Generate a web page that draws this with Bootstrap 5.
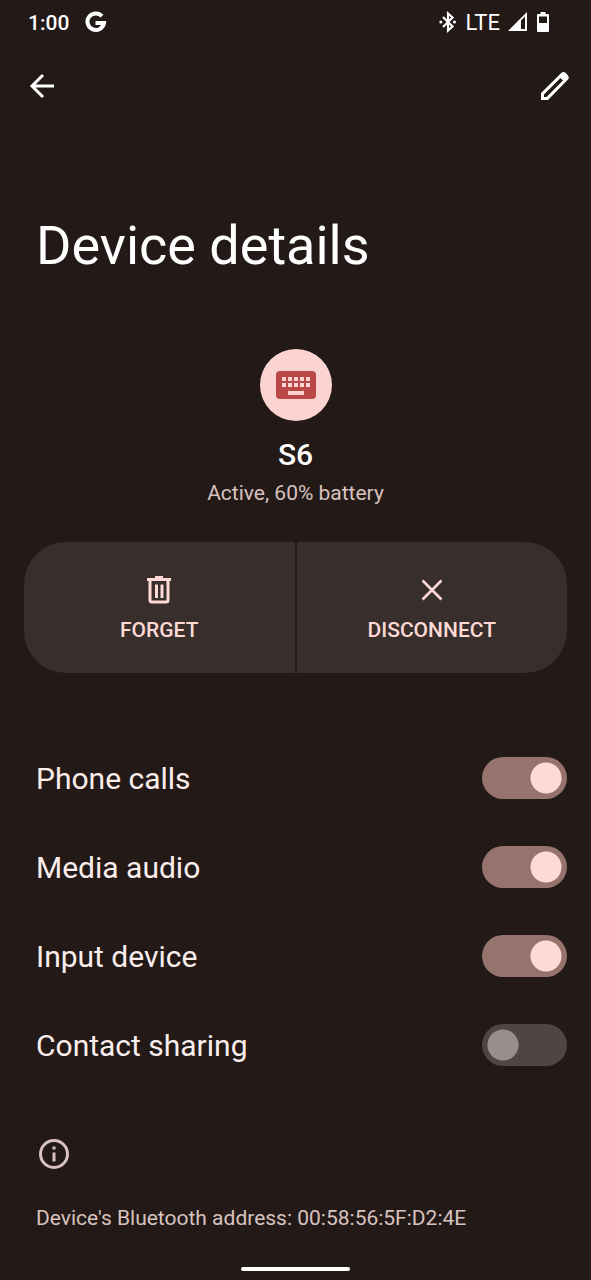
<!DOCTYPE html>
<html lang="en">
<head>
<meta charset="utf-8">
<meta name="viewport" content="width=device-width, initial-scale=1">
<title>Device details</title>
<link href="https://cdn.jsdelivr.net/npm/bootstrap@5.3.0/dist/css/bootstrap.min.css" rel="stylesheet">
<style>
  body { background: #231a18; color: #fff; font-family: Roboto, "Liberation Sans", sans-serif; font-size: 30px; line-height: 36px; }
  svg { display: block; flex: none; }
  .status-bar { height: 44px; padding: 0 40px 0 28px; font-size: 22px; line-height: 44px; }
  .clock { font-size: 21px; font-weight: 500; padding-top: 2px; }
  .network { padding-top: 1px; }
  .app-bar { height: 84px; padding: 0 18px 0 24px; }
  .icon-btn { border: 0; padding: 0; background: none; color: #fff; }
  .page-title { margin: 0; padding: 86px 36px 0; font-size: 54px; line-height: 64px; font-weight: 400; }
  .device { padding-top: 71px; }
  .device-icon { width: 72px; height: 72px; background: #fbd3d0; color: #bb4848; }
  .device-name { margin: 16px 0 0; font-size: 30px; line-height: 36px; font-weight: 500; }
  .muted { color: #d8c2bf; font-size: 21px; line-height: 24px; margin: 0; }
  .device .muted { margin-top: 8px; }
  .actions { gap: 2px; margin: 37px 24px 0; }
  .action { height: 131px; border: 0; border-radius: 0; padding: 2px 0 0; background: #382e2c; color: #ffdad5; font-size: 21px; line-height: 24px; font-weight: 500; }
  .action:hover { background: #443937; color: #ffdad5; }
  .action:first-child { border-radius: 42px 0 0 42px; }
  .action:last-child { border-radius: 0 42px 42px 0; }
  .action svg { margin-bottom: 14px; }
  .settings { padding: 60px 24px 0 36px; }
  .setting { height: 89px; color: #fbeeec; }
  .setting label { padding-top: 2px; }
  .setting .form-check-input {
    --knob: #ffdad5;
    width: 85px; height: 42px; margin: 0; border: 0; float: none; border-radius: 21px;
    background: radial-gradient(circle closest-side, var(--knob) 15px, transparent 16px) 0 0 / 42px 42px no-repeat #4e4544;
    transition: none;
  }
  .setting .form-check-input:not(:checked) { --knob: #9a8e8d; }
  .setting .form-check-input:checked { background-color: #96736c; background-position: right 0 top 0; }
  .info { padding: 47px 36px 0; color: #d8c2bf; }
  .info .muted { margin-top: 34px; }
  .home-bar { width: 109px; height: 4px; margin: 37px auto 9px; background: #fff; border-radius: 2px; }
</style>
</head>
<body>
<header>
  <div class="status-bar d-flex align-items-center">
    <span class="clock">1:00</span>
    <svg class="ms-3" width="22" height="22" viewBox="0 0 22 22" fill="none" stroke="#fff" stroke-width="4"><path d="M17 5.200A8.300 8.300 0 1 0 19 12H10.500"/></svg>
    <svg class="ms-auto" width="18" height="22" viewBox="0 0 18 22" fill="none" stroke="#fff" stroke-width="2.200"><path d="M4 6l9.500 9.500-4.500 4V2.500L13.500 6.500 4 16"/><circle cx="1.800" cy="11" r="1.500" fill="#fff" stroke="none"/><circle cx="15.500" cy="11" r="1.500" fill="#fff" stroke="none"/></svg>
    <span class="network ms-2">LTE</span>
    <svg class="ms-2" width="19" height="20" viewBox="0 0 19 20"><path fill="#fff" fill-rule="evenodd" d="M0 19L19 0V19ZM13 8.500V17H17V4.500Z"/></svg>
    <svg class="ms-2" width="16" height="22" viewBox="0 0 16 22"><path fill="#fff" fill-rule="evenodd" d="M2 4Q2 3 3 3H5.500V1H10.500V3H13Q14 3 14 4V20Q14 21 13 21H3Q2 21 2 20ZM4 5.500V12H12V5.500Z"/></svg>
  </div>
  <nav class="app-bar d-flex align-items-center justify-content-between">
    <button class="icon-btn" type="button" aria-label="Back">
      <svg width="36" height="36" viewBox="0 0 36 36" fill="none" stroke="currentColor" stroke-width="3"><path d="M30 18H8M19 7L8 18l11 11"/></svg>
    </button>
    <button class="icon-btn" type="button" aria-label="Edit">
      <svg width="36" height="36" viewBox="0 0 36 36" fill="currentColor"><path fill-rule="evenodd" d="M4 32V25L24.500 4.700Q26.500 3.200 28.500 4.700L31 7.500Q32.500 9.500 31 11.500L11 32ZM7 26.500V29H9.500L26 12.500 23.500 10Z"/></svg>
    </button>
  </nav>
  <h1 class="page-title">Device details</h1>
</header>
<main>
  <section class="device d-flex flex-column align-items-center text-center">
    <div class="device-icon rounded-circle d-flex align-items-center justify-content-center">
      <svg width="40" height="28" viewBox="0 0 40 28"><rect width="40" height="28" rx="4" fill="currentColor"/><path stroke="#fbd3d0" stroke-width="4" stroke-dasharray="4 2" d="M6 8H34M6 14H34"/><path stroke="#fbd3d0" stroke-width="4" d="M12 22H28"/></svg>
    </div>
    <h2 class="device-name">S6</h2>
    <p class="muted">Active, 60% battery</p>
  </section>
  <div class="actions d-flex">
    <button class="action btn d-flex flex-column align-items-center justify-content-center flex-fill w-50" type="button">
      <svg width="28" height="28" viewBox="0 0 28 28" fill="none" stroke="currentColor" stroke-width="3"><path d="M2 3.500H26M10 1.500H18M5 4V24Q5 26 7 26H21Q23 26 23 24V4M11.500 8.500V22M17 8.500V22"/></svg>
      FORGET
    </button>
    <button class="action btn d-flex flex-column align-items-center justify-content-center flex-fill w-50" type="button">
      <svg width="28" height="28" viewBox="0 0 28 28" fill="none" stroke="currentColor" stroke-width="2.600"><path d="M4.500 4.500L23.500 23.500M23.500 4.500L4.500 23.500"/></svg>
      DISCONNECT
    </button>
  </div>
  <section class="settings">
    <div class="setting d-flex align-items-center justify-content-between"><label for="calls">Phone calls</label><input class="form-check-input" type="checkbox" role="switch" id="calls" checked></div>
    <div class="setting d-flex align-items-center justify-content-between"><label for="media">Media audio</label><input class="form-check-input" type="checkbox" role="switch" id="media" checked></div>
    <div class="setting d-flex align-items-center justify-content-between"><label for="input">Input device</label><input class="form-check-input" type="checkbox" role="switch" id="input" checked></div>
    <div class="setting d-flex align-items-center justify-content-between"><label for="contacts">Contact sharing</label><input class="form-check-input" type="checkbox" role="switch" id="contacts"></div>
  </section>
  <section class="info">
    <svg width="36" height="36" viewBox="0 0 36 36" fill="none" stroke="currentColor" stroke-width="3"><circle cx="18" cy="18" r="13.500"/><path d="M18 16.500V25.500M18 10.500V13.500"/></svg>
    <p class="muted">Device's Bluetooth address: 00:58:56:5F:D2:4E</p>
  </section>
</main>
<div class="home-bar"></div>
<script src="https://cdn.jsdelivr.net/npm/bootstrap@5.3.0/dist/js/bootstrap.bundle.min.js"></script>
</body>
</html>
